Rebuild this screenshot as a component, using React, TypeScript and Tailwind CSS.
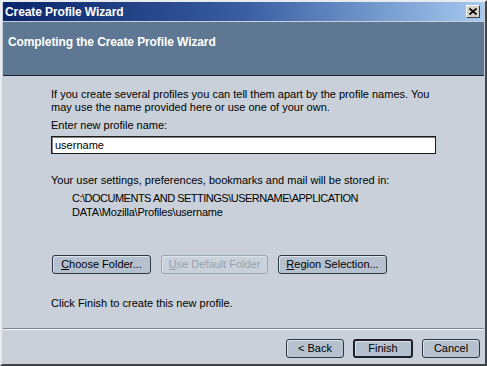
import React from "react";

const font = { fontFamily: '"Liberation Sans", Arial, sans-serif' };

function Btn({
  children,
  disabled,
  primary,
  className = "",
}: {
  children: React.ReactNode;
  disabled?: boolean;
  primary?: boolean;
  className?: string;
}) {
  const border = disabled
    ? "border border-[#9aa6b4] text-[#98a2ae] bg-[#c9d1da]"
    : primary
    ? "border-2 border-[#1c2128] text-black bg-[#b4c0ce]"
    : "border border-[#2e3640] text-black bg-[#b6c1cf]";
  return (
    <div
      className={`h-[19px] rounded-[3px] flex items-center justify-center text-[11px] leading-none shadow-[inset_1px_1px_0_#dde3ea] ${border} ${className}`}
    >
      {children}
    </div>
  );
}

export default function App() {
  return (
    <div
      style={font}
      className="w-[487px] h-[366px] bg-[#c9d0d9] flex flex-col border-l-2 border-t-2 border-[#e8ecf0] border-r-2 border-b-2 border-r-[#404448] border-b-[#404448] text-[11px] text-black"
    >
      {/* title bar */}
      <div className="mx-[1px] h-[19px] flex items-center justify-between pl-[2px] pr-[4px] bg-gradient-to-r from-[#0a246a] via-[#3a5ea0] to-[#a6caf0]">
        <span className="text-white font-bold text-[12px] leading-none tracking-[-0.1px]">
          Create Profile Wizard
        </span>
        <div className="w-[14px] h-[13px] bg-[#d4d0c8] border border-t-white border-l-white border-r-[#404040] border-b-[#404040] flex items-center justify-center">
          <svg width="8" height="7" viewBox="0 0 8 7">
            <path d="M0.5 0.5 L7.5 6.5 M7.5 0.5 L0.5 6.5" stroke="#000" strokeWidth="1.6" />
          </svg>
        </div>
      </div>

      {/* header */}
      <div className="mx-[1px] mt-[1px] h-[54px] bg-[#5e7793] border-b border-[#1c2230] pl-[5px] pt-[12px]">
        <span className="text-white font-bold text-[12px] leading-[14px] tracking-[-0.1px]">
          Completing the Create Profile Wizard
        </span>
      </div>

      {/* body */}
      <div className="flex-1 mx-[1px] pl-[48px] pr-[48px] pt-[12px] flex flex-col leading-[13px]">
        <p>
          If you create several profiles you can tell them apart by the profile names. You
          <br />
          may use the name provided here or use one of your own.
        </p>
        <p className="mt-[5px]">Enter new profile name:</p>
        <div className="mt-[4px] w-[385px] h-[18px] bg-white border border-[#1a1a1a] shadow-[inset_1px_1px_0_#808080] flex items-center pl-[3px]">
          username
        </div>
        <p className="mt-[20px]">Your user settings, preferences, bookmarks and mail will be stored in:</p>
        <p className="mt-[4px] pl-[21px] leading-[14px] tracking-[-0.5px]">
          C:\DOCUMENTS AND SETTINGS\USERNAME\APPLICATION
          <br />
          <span className="tracking-[-0.2px]">DATA\Mozilla\Profiles\username</span>
        </p>
        <div className="mt-[36px] flex gap-[10px] pl-[1px]">
          <Btn className="w-[99px]">
            <span>
              <u>C</u>hoose Folder...
            </span>
          </Btn>
          <Btn disabled className="w-[107px]">
            <span>
              <u>U</u>se Default Folder
            </span>
          </Btn>
          <Btn className="w-[109px]">
            <span>
              <u>R</u>egion Selection...
            </span>
          </Btn>
        </div>
        <p className="mt-[23px]">Click Finish to create this new profile.</p>
      </div>

      {/* footer */}
      <div className="mx-[1px] border-t border-[#7c8490] shadow-[inset_0_1px_0_#f4f6f8] h-[36px] flex items-start justify-end gap-[9px] pr-[4px] pt-[10px]">
        <Btn className="w-[58px]">&lt; Back</Btn>
        <Btn primary className="w-[60px]">
          Finish
        </Btn>
        <Btn className="w-[58px]">Cancel</Btn>
      </div>
    </div>
  );
}
